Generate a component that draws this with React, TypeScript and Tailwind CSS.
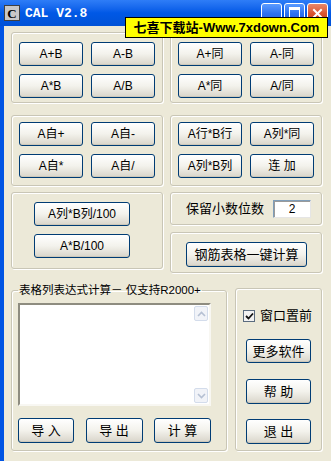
import React from "react";

const F = { fontFamily: '"Liberation Sans", "Noto Sans CJK SC", sans-serif' };

function Btn({ children, className = "" }: { children: React.ReactNode; className?: string }) {
  return (
    <div
      className={`flex items-center justify-center rounded-[3px] border border-[#003C74] bg-linear-to-b from-white via-[#F3F2EC] to-[#D9D5CA] text-[12px] leading-none text-black shadow-[inset_0_-1px_0_#CDC8BA] ${className}`}
    >
      {children}
    </div>
  );
}

function Group({ children, className = "" }: { children: React.ReactNode; className?: string }) {
  return (
    <div
      className={`rounded-[3px] border border-[#C9C6B6] shadow-[inset_1px_1px_0_#FFFFFF,1px_1px_0_#FFFFFF] ${className}`}
    >
      {children}
    </div>
  );
}

function WinBtn({ kind }: { kind: "min" | "max" | "close" }) {
  const bg =
    kind === "close"
      ? "bg-linear-to-b from-[#E8876A] via-[#D9542F] to-[#C23A15]"
      : "bg-linear-to-b from-[#5B9BFF] via-[#2D72F0] to-[#1E5FE0]";
  return (
    <div className={`flex h-[21px] w-[21px] items-start justify-center rounded-[3px] border border-white ${bg}`}>
      {kind === "close" && (
        <svg width="13" height="13" viewBox="0 0 13 13" className="mt-[3px]">
          <path d="M3 3 L10 10 M10 3 L3 10" stroke="white" strokeWidth="2" strokeLinecap="square" />
        </svg>
      )}
      {kind === "max" && <div className="mt-[3px] h-[11px] w-[11px] border border-white border-t-[3px]" />}
    </div>
  );
}

export default function App() {
  return (
    <div className="relative h-[461px] w-[331px] overflow-hidden bg-[#0054E3]" style={F}>
      {/* Title bar */}
      <div className="relative flex h-[26px] items-center bg-linear-to-b from-[#2E7DF7] via-[#0058E6] to-[#0052D6] pl-[4px]">
        <div
          className="flex h-[16px] w-[16px] items-center justify-center border border-[#404040] bg-[#C8C8C8] text-[13px] font-bold leading-none text-black"
          style={{ fontFamily: '"Liberation Serif", serif' }}
        >
          C
        </div>
        <div
          className="ml-[5px] whitespace-pre text-[13px] font-bold leading-none text-white"
          style={{ fontFamily: '"Liberation Mono", monospace' }}
        >
          CAL V2.8
        </div>
        <div className="absolute right-[3px] top-[3px] flex gap-[2px]">
          <WinBtn kind="min" />
          <WinBtn kind="max" />
          <WinBtn kind="close" />
        </div>
        <div
          className="absolute left-[125px] top-[17px] flex h-[21px] w-[203px] items-center justify-center border border-black bg-[#FFFF00] text-[13px] font-bold leading-none text-black"
        >
          七喜下载站-Www.7xdown.Com
        </div>
      </div>

      {/* Body */}
      <div className="ml-[4px] flex h-[435px] flex-col bg-[#ECE9D8] pl-[7px] pr-[9px] pt-[6px]">
        {/* Row 1 */}
        <div className="flex gap-[7px]">
          <Group className="h-[71px] w-[152px] pt-[9px]">
            <div className="grid grid-cols-[64px_64px] justify-center gap-x-[8px] gap-y-[8px]">
              <Btn className="h-[24px] text-[11px]">A+B</Btn>
              <Btn className="h-[24px] text-[11px]">A-B</Btn>
              <Btn className="h-[24px] text-[11px]">A*B</Btn>
              <Btn className="h-[24px] text-[11px]">A/B</Btn>
            </div>
          </Group>
          <Group className="h-[71px] w-[152px] pt-[9px]">
            <div className="grid grid-cols-[64px_64px] justify-center gap-x-[8px] gap-y-[8px]">
              <Btn className="h-[24px]">A+同</Btn>
              <Btn className="h-[24px]">A-同</Btn>
              <Btn className="h-[24px]">A*同</Btn>
              <Btn className="h-[24px]">A/同</Btn>
            </div>
          </Group>
        </div>

        {/* Row 2 */}
        <div className="mt-[12px] flex gap-[7px]">
          <Group className="h-[71px] w-[152px] pt-[6px]">
            <div className="grid grid-cols-[64px_64px] justify-center gap-x-[8px] gap-y-[8px]">
              <Btn className="h-[24px]">A自+</Btn>
              <Btn className="h-[24px]">A自-</Btn>
              <Btn className="h-[24px]">A自*</Btn>
              <Btn className="h-[24px]">A自/</Btn>
            </div>
          </Group>
          <Group className="h-[71px] w-[152px] pt-[6px]">
            <div className="grid grid-cols-[64px_64px] justify-center gap-x-[8px] gap-y-[8px]">
              <Btn className="h-[24px]">A行*B行</Btn>
              <Btn className="h-[24px]">A列*同</Btn>
              <Btn className="h-[24px]">A列*B列</Btn>
              <Btn className="h-[24px]">连 加</Btn>
            </div>
          </Group>
        </div>

        {/* Row 3 */}
        <div className="mt-[6px] flex items-start gap-[7px]">
          <Group className="flex h-[77px] w-[152px] flex-col gap-[8px] pl-[22px] pt-[9px]">
            <Btn className="h-[24px] w-[96px]">A列*B列/100</Btn>
            <Btn className="h-[24px] w-[96px] text-[11px]">A*B/100</Btn>
          </Group>
          <div className="flex w-[152px] flex-col gap-[7px]">
            <Group className="flex h-[33px] items-center pl-[15px]">
              <span className="text-[13px] leading-none text-black">保留小数位数</span>
              <div className="ml-[9px] flex h-[18px] w-[38px] items-center justify-center border border-t-[#7F9DB9] border-l-[#7F9DB9] border-b-[#E5E5E5] border-r-[#E5E5E5] bg-white text-[12px] leading-none text-black shadow-[inset_1px_1px_0_#9A9A9A]">
                2
              </div>
            </Group>
            <Group className="h-[41px] pl-[15px] pt-[9px]">
              <Btn className="h-[25px] w-[121px] text-[13px]">钢筋表格一键计算</Btn>
            </Group>
          </div>
        </div>

        {/* Row 4 */}
        <div className="mt-[10px] flex items-start gap-[8px]">
          <fieldset className="h-[168px] w-[216px] rounded-[3px] border border-[#C9C6B6] px-[6px] shadow-[inset_1px_1px_0_#FFFFFF,1px_1px_0_#FFFFFF]">
            <legend className="px-[1px] text-[11.5px] leading-[14px] text-black">表格列表达式计算－ 仅支持R2000+</legend>
            <div className="mt-[6px] flex h-[103px] w-[193px] border-2 border-t-[#8E8C80] border-l-[#8E8C80] border-b-[#F8F7F2] border-r-[#F8F7F2] bg-white">
              <div className="flex-1" />
              <div className="flex w-[15px] flex-col justify-between py-[1px] pr-[1px]">
                <div className="flex h-[15px] items-center justify-center rounded-[2px] border border-[#D3DCEB] bg-[#F1F3F8]">
                  <svg width="9" height="6" viewBox="0 0 9 6">
                    <path d="M1 5 L4.5 1.5 L8 5" stroke="#B5C0D3" strokeWidth="1.6" fill="none" />
                  </svg>
                </div>
                <div className="flex h-[15px] items-center justify-center rounded-[2px] border border-[#D3DCEB] bg-[#F1F3F8]">
                  <svg width="9" height="6" viewBox="0 0 9 6">
                    <path d="M1 1 L4.5 4.5 L8 1" stroke="#B5C0D3" strokeWidth="1.6" fill="none" />
                  </svg>
                </div>
              </div>
            </div>
            <div className="mt-[12px] flex w-[193px] justify-between">
              <Btn className="h-[25px] w-[56px] text-[13px]">导 入</Btn>
              <Btn className="h-[25px] w-[57px] text-[13px]">导 出</Btn>
              <Btn className="h-[25px] w-[57px] text-[13px]">计 算</Btn>
            </div>
          </fieldset>
          <Group className="mt-[5px] flex h-[163px] w-[87px] flex-col items-center pt-[20px]">
            <div className="flex items-center self-start pl-[7px]">
              <div className="flex h-[12px] w-[12px] items-center justify-center border border-[#5A6B7E] bg-[#F2F2F2]">
                <svg width="9" height="8" viewBox="0 0 9 8">
                  <path d="M1 4 L3.5 6.5 L8 1.5" stroke="#111" strokeWidth="1.8" fill="none" />
                </svg>
              </div>
              <span className="ml-[5px] text-[13px] leading-none text-black">窗口置前</span>
            </div>
            <Btn className="mt-[17px] h-[24px] w-[65px] text-[13px]">更多软件</Btn>
            <Btn className="mt-[16px] h-[25px] w-[65px] text-[13px]">帮 助</Btn>
            <Btn className="mt-[15px] h-[25px] w-[65px] text-[13px]">退 出</Btn>
          </Group>
        </div>
      </div>
    </div>
  );
}
